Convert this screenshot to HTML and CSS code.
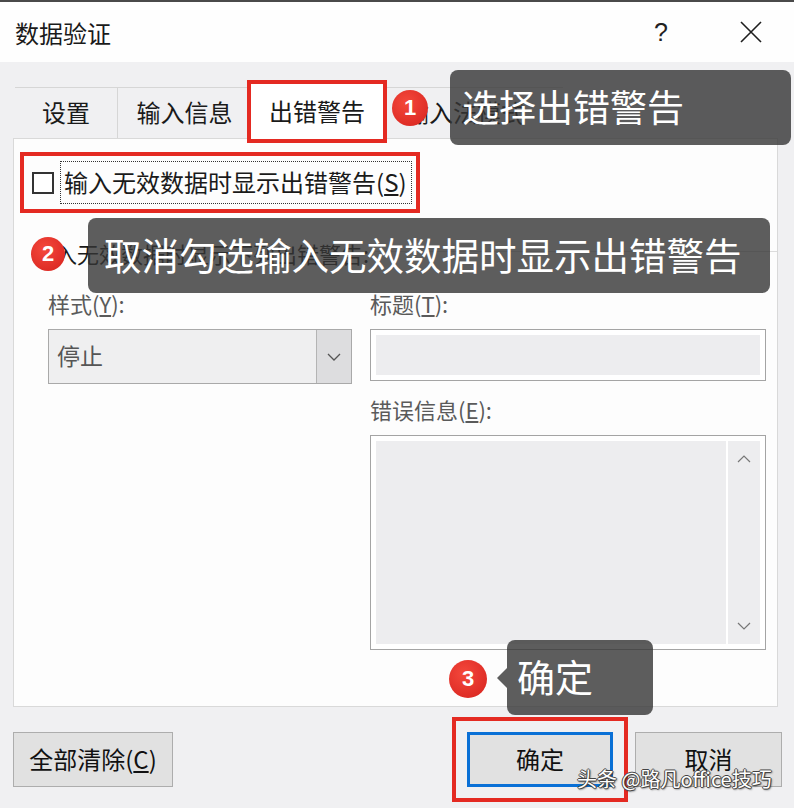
FILE: index.html
```html
<!DOCTYPE html>
<html lang="zh-CN">
<head>
    <meta charset="utf-8">
    <title>数据验证</title>
    <link rel="stylesheet" href="styles.css">
</head>
<body>
<div class="dialog">
    <div class="titlebar">
        <span class="title">数据验证</span>
        <span class="help">?</span>
        <span class="close">
            <svg width="22" height="22" viewBox="0 0 22 22"><path d="M1 1L21 21M21 1L1 21" stroke="#1e1e1e" stroke-width="1.6" fill="none"/></svg>
        </span>
    </div>

    <div class="tabs">
        <div class="tab tab-first">设置</div>
        <div class="tab">输入信息</div>
        <div class="tab active marked">出错警告</div>
        <div class="tab tab-last">输入法模式</div>
    </div>

    <div class="panel">
        <div class="check-row marked">
            <span class="checkbox"></span>
            <span class="check-label">输入无效数据时显示出错警告(<u>S</u>)</span>
        </div>

        <div class="group-head">
            <span>输入无效数据时显示下列出错警告:</span>
            <span class="group-line"></span>
        </div>

        <div class="fields">
            <div class="col-left">
                <div class="field-label">样式(<u>Y</u>):</div>
                <div class="select">
                    <span class="select-value">停止</span>
                    <span class="select-btn">
                        <svg width="14" height="8" viewBox="0 0 14 8"><path d="M1 1L7 7L13 1" stroke="#555" stroke-width="1.3" fill="none"/></svg>
                    </span>
                </div>
            </div>
            <div class="col-right">
                <div class="field-label">标题(<u>T</u>):</div>
                <div class="input"><div class="fill"></div></div>
                <div class="field-label second">错误信息(<u>E</u>):</div>
                <div class="textarea">
                    <div class="fill"></div>
                    <div class="scroll">
                        <svg width="14" height="8" viewBox="0 0 14 8"><path d="M1 7L7 1L13 7" stroke="#777" stroke-width="1.2" fill="none"/></svg>
                        <svg width="14" height="8" viewBox="0 0 14 8"><path d="M1 1L7 7L13 1" stroke="#777" stroke-width="1.2" fill="none"/></svg>
                    </div>
                </div>
            </div>
        </div>
    </div>

    <div class="footer">
        <button class="btn btn-clear">全部清除(<u>C</u>)</button>
        <button class="btn btn-ok marked">确定</button>
        <button class="btn btn-cancel">取消</button>
    </div>

    <!-- annotations -->
    <span class="badge b1">1</span>
    <div class="tip tip1">选择出错警告</div>
    <span class="badge b2">2</span>
    <div class="tip tip2">取消勾选输入无效数据时显示出错警告</div>
    <span class="badge b3">3</span>
    <div class="tip tip3">确定</div>
    <div class="watermark">头条 @路凡office技巧</div>
</div>
</body>
</html>
```

FILE: styles.css
```css
body {
    margin: 0;
    font-family: "Noto Sans CJK SC", "Noto Sans", sans-serif;
    color: #1a1a1a;
}
.dialog {
    position: relative;
    width: 794px;
    height: 808px;
    overflow: hidden;
    background: #f0f0f2;
}

/* title bar */
.titlebar {
    display: flex;
    align-items: center;
    height: 62px;
    box-sizing: border-box;
    padding: 0 0 0 15px;
    border-top: 2px solid #4a4a4a;
    background: #fefefe;
}
.title { font-size: 24px; }
.help {
    margin-left: auto;
    margin-right: 72px;
    font-family: "Liberation Sans", sans-serif;
    font-size: 25px;
    color: #222;
}
.close { display: flex; margin-right: 32px; }

/* tabs */
.tabs {
    display: flex;
    align-items: flex-end;
    height: 54px;
    margin: 22px 0 0 15px;
}
.tab {
    display: flex;
    align-items: center;
    justify-content: center;
    box-sizing: border-box;
    height: 51px;
    padding-bottom: 4px;
    border-top: 1px solid #d6d6d6;
    border-right: 1px solid #d6d6d6;
    font-size: 24px;
    white-space: nowrap;
}
.tab-first { width: 103px; }
.tab:nth-child(2) { width: 133px; border-right: none; }
.tab.active {
    position: relative;
    z-index: 1;
    width: 132px;
    height: 55px;
    margin-bottom: -1px;
    padding-bottom: 3px;
    border: none;
    background: #fff;
}
.tab-last {
    width: 180px;
    justify-content: flex-start;
    padding-left: 22px;
    border-right: none;
}
.marked { outline: 4px solid #e42a22; }

/* panel */
.panel {
    width: 765px;
    height: 569px;
    margin-left: 13px;
    box-sizing: border-box;
    border: 1px solid #d9d9d9;
    background: #fdfdfd;
    overflow: hidden;
}
.check-row {
    display: flex;
    align-items: center;
    width: 392px;
    height: 53px;
    box-sizing: border-box;
    margin: 17px 0 0 10px;
    padding-left: 8px;
}
.checkbox {
    width: 22px;
    height: 22px;
    box-sizing: border-box;
    border: 2px solid #333;
    background: #fff;
}
.check-label {
    height: 43px;
    box-sizing: border-box;
    margin-left: 6px;
    padding: 0 4px 0 3px;
    border: 1px dotted #333;
    font-size: 24px;
    line-height: 40px;
    white-space: nowrap;
}
.group-head {
    display: flex;
    align-items: center;
    height: 30px;
    margin: 29px 0 0 19px;
    font-size: 22px;
    white-space: nowrap;
}
.group-line {
    flex: 1;
    margin: -4px 0 0 6px;
    border-top: 1px solid #dcdcdc;
}
.fields {
    display: flex;
    gap: 18px;
    margin: 21px 0 0 34px;
}
.col-left { width: 304px; }
.col-right { width: 396px; }
.field-label {
    height: 30px;
    margin-bottom: 10px;
    font-size: 22px;
    line-height: 28px;
    color: #5a5a5a;
}
.field-label.second { margin-top: 14px; }
.select {
    display: flex;
    height: 55px;
    box-sizing: border-box;
    border: 1px solid #a9a9a9;
    background: #efeff0;
}
.select-value {
    flex: 1;
    display: flex;
    align-items: center;
    padding: 0 0 3px 8px;
    font-size: 23px;
    color: #555;
}
.select-btn {
    display: flex;
    align-items: center;
    justify-content: center;
    width: 34px;
    border-left: 1px solid #b4b4b4;
    background: #dddddf;
}
.input {
    height: 52px;
    box-sizing: border-box;
    padding: 5px;
    border: 1px solid #a4a4a4;
    background: #fff;
}
.fill { height: 100%; flex: 1; background: #ededef; }
.textarea {
    display: flex;
    height: 215px;
    box-sizing: border-box;
    padding: 5px;
    border: 1px solid #a4a4a4;
    background: #fff;
}
.scroll {
    display: flex;
    flex-direction: column;
    justify-content: space-between;
    align-items: center;
    width: 32px;
    margin-left: 2px;
    padding: 14px 0 14px;
    background: #ededef;
}

/* footer */
.footer {
    display: flex;
    margin-top: 25px;
    padding: 0 12px 0 13px;
}
.btn {
    display: flex;
    align-items: center;
    justify-content: center;
    height: 55px;
    box-sizing: border-box;
    border: 1px solid #adadad;
    background: #e1e1e1;
    font-family: inherit;
    font-size: 24px;
    color: #111;
    padding: 0 0 2px;
}
.btn-clear { width: 160px; }
.btn-ok {
    width: 146px;
    margin-left: auto;
    border: 3px solid #0a70d6;
    outline-offset: 11px;
}
.btn-cancel { width: 147px; margin-left: 22px; }

/* annotations */
.badge {
    position: absolute;
    display: flex;
    align-items: center;
    justify-content: center;
    border-radius: 50%;
    background: radial-gradient(circle at 40% 35%, #f4483c, #d6221d);
    color: #fff;
    font-family: "Liberation Sans", sans-serif;
    font-weight: bold;
    font-size: 22px;
}
.b1 { left: 392px; top: 90px; width: 36px; height: 36px; }
.b2 { left: 31px; top: 237px; width: 34px; height: 34px; }
.b3 { left: 449px; top: 660px; width: 38px; height: 38px; }
.tip {
    position: absolute;
    height: 75px;
    box-sizing: border-box;
    border-radius: 8px;
    background: rgba(52, 52, 52, 0.8);
    color: #fff;
    font-size: 37.5px;
    line-height: 72px;
    white-space: nowrap;
}
.tip1 { left: 450px; top: 70px; width: 341px; padding-left: 12px; font-size: 37px; }
.tip2 { left: 88px; top: 218px; width: 682px; padding-left: 16px; }
.tip3 { left: 507px; top: 640px; width: 146px; padding-left: 10px; font-size: 38px; }
.tip3::before {
    content: "";
    position: absolute;
    left: -10px;
    top: 28px;
    border-style: solid;
    border-width: 10px 10px 10px 0;
    border-color: transparent rgba(52, 52, 52, 0.8) transparent transparent;
}
.watermark {
    position: absolute;
    left: 577px;
    top: 764px;
    font-size: 20px;
    color: #fff;
    white-space: nowrap;
    text-shadow: 1px 0 #444, -1px 0 #444, 0 1px #444, 0 -1px #444, 1px 1px 2px #222;
}
```
